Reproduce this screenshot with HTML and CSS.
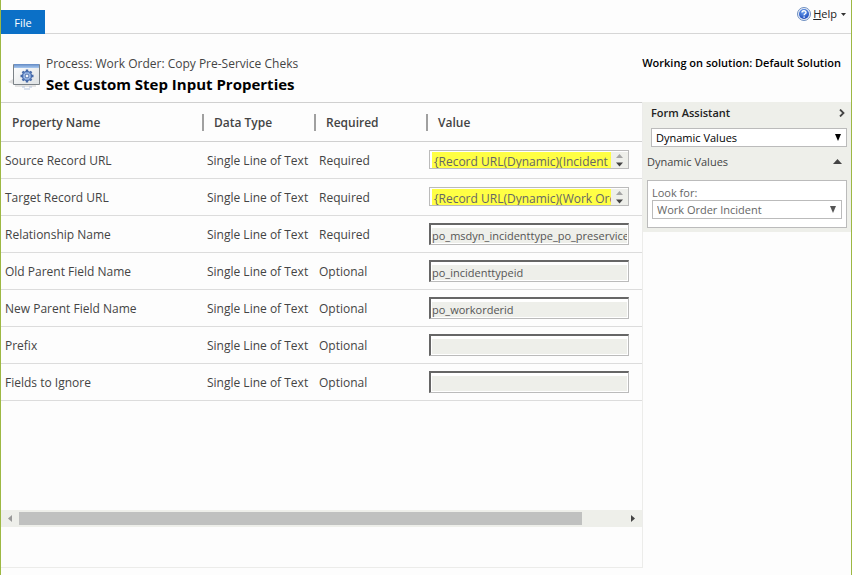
FILE: index.html
```html
<!DOCTYPE html>
<html lang="en">
<head>
<meta charset="utf-8">
<title>Set Custom Step Input Properties</title>
<link rel="stylesheet" href="styles.css">
</head>
<body>
<div class="window">
  <nav class="ribbon">
    <button class="file-tab" type="button">File</button>
    <button class="help" type="button">
      <svg width="14" height="14" viewBox="0 0 14 14" aria-hidden="true">
        <defs><radialGradient id="orb" cx="45%" cy="30%" r="75%"><stop offset="0" stop-color="#6fa5f2"/><stop offset="1" stop-color="#1743b5"/></radialGradient></defs>
        <circle cx="7" cy="7" r="6.5" fill="#e8eef8" stroke="#6f8fc0" stroke-width="1"/>
        <circle cx="7" cy="7" r="5" fill="url(#orb)"/>
        <path d="M5 5.6C5 3.2 9 3.2 9 5.5C9 6.8 7.1 6.8 7.1 8.3M7.1 9.4v1.3" fill="none" stroke="#fff" stroke-width="1.4"/>
      </svg>
      <span class="help-label"><u>H</u>elp</span>
      <svg width="5" height="3" viewBox="0 0 5 3" aria-hidden="true"><path d="M0 0h5L2.5 3z" fill="#333"/></svg>
    </button>
  </nav>

  <header class="heading">
    <svg class="step-icon" width="32" height="28" viewBox="0 0 32 28" aria-hidden="true">
      <defs>
        <linearGradient id="bar" x1="0" y1="0" x2="0" y2="1"><stop offset="0" stop-color="#6189c4"/><stop offset="1" stop-color="#a9c9f0"/></linearGradient>
        <linearGradient id="pane" x1="0" y1="0" x2="1" y2="1"><stop offset="0" stop-color="#fff"/><stop offset="1" stop-color="#dde1e3"/></linearGradient>
      </defs>
      <path d="M0 20l5-3v5z" fill="#ddd"/>
      <path d="M7 23h21v2H7z" fill="#e3e3e3"/>
      <path d="M5.500 2.500h26v20h-26z" fill="url(#pane)" stroke="#7b8287"/>
      <path d="M6 2h25v4H6z" fill="url(#bar)"/>
      <g transform="translate(19 14)" stroke="#4468a8" stroke-width="2.400">
        <path d="M0-6.500V6.500M-6.500 0H6.500M-4.500-4.500L4.500 4.500M-4.500 4.500L4.500-4.500"/>
        <circle r="3.800" fill="#dbe8fa" stroke="#7da0d8" stroke-width="2"/>
        <circle r="4.700" fill="none" stroke-width="1"/>
        <circle r="2" fill="#f4f8ff" stroke-width="1"/>
      </g>
      <path d="M14 25h3M21 25h3M16 27h6" stroke="#b4c3dc"/>
    </svg>
    <div class="titles">
      <p class="process">Process: Work Order: Copy Pre-Service Cheks</p>
      <h1>Set Custom Step Input Properties</h1>
    </div>
    <p class="solution">Working on solution: Default Solution</p>
  </header>

  <main class="content">
    <section class="properties">
      <table>
        <colgroup><col class="col-name"><col class="col-type"><col class="col-type"><col></colgroup>
        <thead>
          <tr><th><span>Property Name</span></th><th><span>Data Type</span></th><th><span>Required</span></th><th><span>Value</span></th></tr>
        </thead>
        <tbody>
          <tr><td><label for="p1">Source Record URL</label></td><td>Single Line of Text</td><td>Required</td>
            <td><div class="dynamic"><textarea id="p1" rows="1" wrap="off">{Record URL(Dynamic)(Incident Type (Work Order Incident))}</textarea><span class="stepper"><svg width="7" height="13" viewBox="0 0 7 13" aria-hidden="true"><path d="M0 4L3.500 0L7 4z" fill="#a5a5a5"/><path d="M0 8.500L3.500 12.500L7 8.500z" fill="#444"/></svg></span></div></td></tr>
          <tr><td><label for="p2">Target Record URL</label></td><td>Single Line of Text</td><td>Required</td>
            <td><div class="dynamic"><textarea id="p2" rows="1" wrap="off">{Record URL(Dynamic)(Work Order (Work Order))}</textarea><span class="stepper"><svg width="7" height="13" viewBox="0 0 7 13" aria-hidden="true"><path d="M0 4L3.500 0L7 4z" fill="#a5a5a5"/><path d="M0 8.500L3.500 12.500L7 8.500z" fill="#444"/></svg></span></div></td></tr>
          <tr><td><label for="p3">Relationship Name</label></td><td>Single Line of Text</td><td>Required</td><td><input id="p3" class="field" type="text" value="po_msdyn_incidenttype_po_preservicecheck"></td></tr>
          <tr><td><label for="p4">Old Parent Field Name</label></td><td>Single Line of Text</td><td>Optional</td><td><input id="p4" class="field" type="text" value="po_incidenttypeid"></td></tr>
          <tr><td><label for="p5">New Parent Field Name</label></td><td>Single Line of Text</td><td>Optional</td><td><input id="p5" class="field" type="text" value="po_workorderid"></td></tr>
          <tr><td><label for="p6">Prefix</label></td><td>Single Line of Text</td><td>Optional</td><td><input id="p6" class="field" type="text"></td></tr>
          <tr><td><label for="p7">Fields to Ignore</label></td><td>Single Line of Text</td><td>Optional</td><td><input id="p7" class="field" type="text"></td></tr>
        </tbody>
      </table>
      <div class="scrollbar">
        <button type="button" aria-label="Scroll left"><svg width="4" height="7" viewBox="0 0 4 7"><path d="M4 0v7L0 3.500z" fill="#999"/></svg></button>
        <div class="track"><div class="thumb"></div></div>
        <button type="button" aria-label="Scroll right"><svg width="4" height="7" viewBox="0 0 4 7"><path d="M0 0v7L4 3.500z" fill="#444"/></svg></button>
      </div>
    </section>

    <aside class="assistant">
      <div class="assistant-head">
        <h2>Form Assistant</h2>
        <svg width="6" height="8" viewBox="0 0 6 8" aria-hidden="true"><path d="M1 .5L4.500 4L1 7.500" fill="none" stroke="#444" stroke-width="1.800"/></svg>
      </div>
      <div class="picker picker-main">
        <select aria-label="Form Assistant"><option>Dynamic Values</option></select>
        <svg width="6" height="7" viewBox="0 0 6 7" aria-hidden="true"><path d="M0 0h6L3 7z" fill="#000"/></svg>
      </div>
      <div class="section-head">
        <h3>Dynamic Values</h3>
        <svg width="9" height="5" viewBox="0 0 9 5" aria-hidden="true"><path d="M0 5L4.500 0L9 5z" fill="#444"/></svg>
      </div>
      <div class="lookup">
        <label for="look">Look for:</label>
        <div class="picker picker-look">
          <select id="look"><option>Work Order Incident</option></select>
          <svg width="6" height="7" viewBox="0 0 6 7" aria-hidden="true"><path d="M0 0h6L3 7z" fill="#555"/></svg>
        </div>
      </div>
    </aside>
  </main>
</div>
</body>
</html>
```
FILE: styles.css
```css
* { box-sizing: border-box; }
body { margin: 0; background: #fdfdfd; color: #444; font: 13px/18px "Open Sans", "Noto Sans", sans-serif; }
h1, h2, h3, p { margin: 0; }
button, input, select, textarea { font: inherit; color: inherit; margin: 0; border-radius: 0; }
button { border: 0; padding: 0; background: none; }
svg { display: block; flex: none; }

.window { min-height: 100vh; display: flex; flex-direction: column; border: solid #9db843; border-width: 0 1px; }

.ribbon { display: flex; justify-content: space-between; align-items: flex-start; padding-top: 10px; border-bottom: 1px solid #d6d6d6; height: 34px; }
.file-tab { width: 44px; height: 24px; background: #0b70c7; color: #fff; font-size: 11px; padding-top: 2px; }
.help { display: flex; align-items: center; gap: 2px; margin-top: -5px; padding-right: 5px; font-size: 11px; color: #222; }
.help-label { margin-right: 2px; }

.heading { display: flex; align-items: flex-start; padding: 21px 10px 0 7px; height: 68px; }
.step-icon { margin-top: 7px; }
.titles { flex: 1; padding-left: 6px; }
.process { font-size: 12px; }
h1 { font-size: 15px; line-height: 22px; font-weight: 700; color: #000; }
.solution { font-size: 11px; line-height: 16px; font-weight: 600; color: #000; }

.content { flex: 1; display: grid; grid-template-columns: minmax(0, 1fr) 208px; align-items: start; padding-bottom: 7px; }
.properties { align-self: stretch; display: flex; flex-direction: column; justify-content: space-between; border: solid #ececea; border-width: 0 1px 1px 0; padding-bottom: 40px; }

table { width: 100%; table-layout: fixed; border-collapse: separate; border-spacing: 0; border-top: 1px solid #d0d0d0; }
.col-name { width: 201px; }
.col-type { width: 112px; }
th { height: 39px; padding: 0; border-bottom: 1px solid #d0d0d0; font-weight: 600; font-size: 12px; text-align: left; }
th span { display: block; line-height: 17px; padding-left: 10px; border-left: 2px solid #a0a0a0; }
th:first-child span { padding-left: 11px; border-left: 0; }
td { height: 37px; padding: 2px 0 0 5px; border-bottom: 1px solid #dcdcdc; font-size: 12px; white-space: nowrap; }
td:first-child { padding-left: 4px; }
td:last-child { padding: 0 0 0 3px; }

.field { display: block; width: 200px; height: 22px; padding: 3px 1px 1px 1px; border: 1px solid #bbb; border-top: 2px solid #666; border-left: 2px solid #666; background: linear-gradient(#eeefea, #eeefea) content-box, #fff; font-size: 11px; line-height: 14px; color: #555; outline: 0; }
.dynamic { display: flex; width: 200px; height: 19px; margin-bottom: 1px; border: 1px solid #bbb; background: #fff; padding: 1px 0 0 2px; }
.dynamic textarea { flex: 1; min-width: 0; height: 16px; padding: 1px 0 0 2px; border: 0; resize: none; overflow: hidden; background: #ff4; color: #666; font-size: 12px; line-height: 18px; outline: 0; }
.stepper { width: 17px; display: grid; place-items: center; background: #eeefea; }

.scrollbar { display: flex; height: 17px; background: #eeefea; }
.scrollbar button { width: 18px; display: grid; place-items: center; }
.track { flex: 1; padding: 2px 0; }
.thumb { width: 93%; height: 13px; background: #c0c1c0; }

.assistant { background: #eeefea; padding: 0 4px 4px; font-size: 11px; }
.assistant-head { display: flex; justify-content: space-between; align-items: center; height: 26px; padding: 0 2px 4px 4px; }
h2 { font-size: 11px; font-weight: 600; color: #222; }
.picker { display: grid; align-items: center; }
.picker select, .picker svg { grid-area: 1 / 1; }
.picker svg { justify-self: end; margin-right: 6px; pointer-events: none; }
.picker select { appearance: none; width: 100%; height: 19px; padding: 0 16px 0 4px; border: 1px solid #bbb; background: #fff; line-height: 16px; }
.picker-main { margin-left: 4px; color: #000; }
.section-head { display: flex; justify-content: space-between; align-items: center; height: 33px; padding: 0 5px 4px 0; }
h3 { font-size: 11px; font-weight: 400; }
.lookup { height: 48px; padding: 4px; border: 1px solid #bbb; background: #fff; color: #666; }
.lookup label { display: block; line-height: 15px; }
```
